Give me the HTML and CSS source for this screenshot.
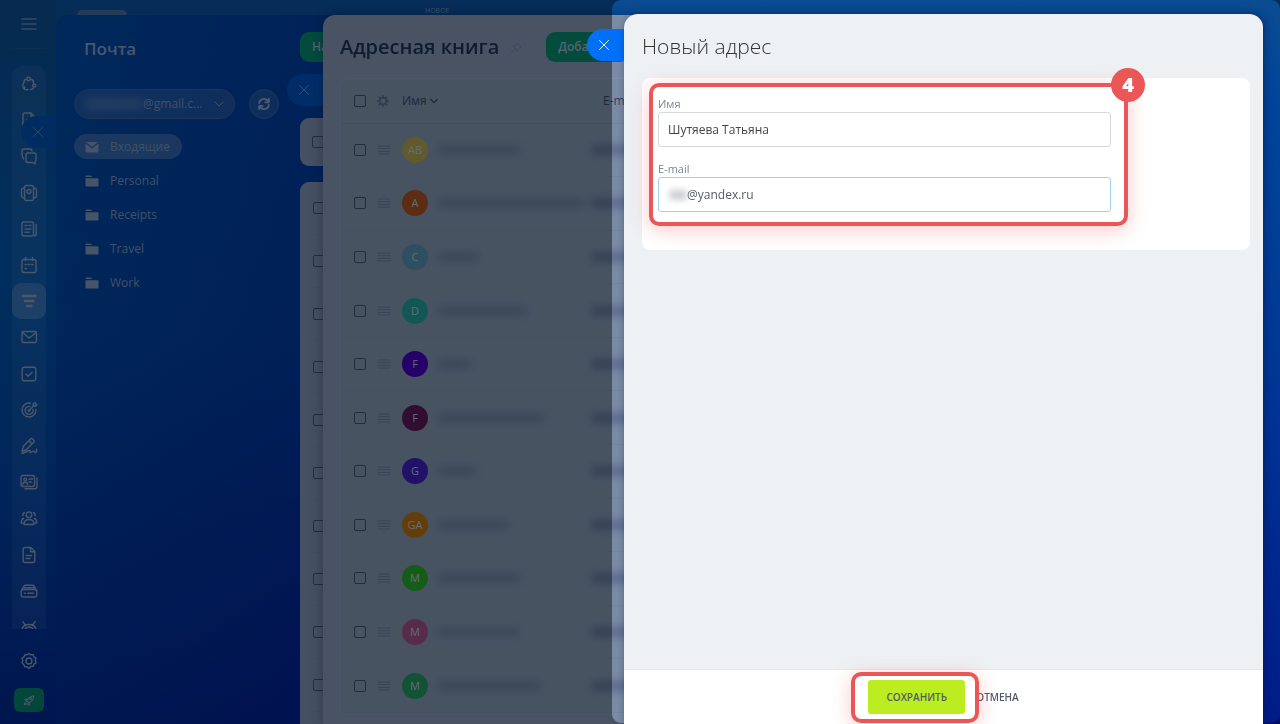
FILE: index.html
```html
<!DOCTYPE html>
<html lang="ru">
<head>
<meta charset="utf-8">
<title>Новый адрес</title>
<link rel="stylesheet" href="styles.css">
</head>
<body>

<svg class="defs" aria-hidden="true">
  <symbol id="cross" viewBox="0 0 12 12"><path d="M1.5 1.5l9 9M10.5 1.5l-9 9"/></symbol>
  <symbol id="folder" viewBox="0 0 14 12"><path d="M.5 1.2q0-.7.7-.7h4.3l2 1.500H.5z M.5 3.200h12.300q.7 0 .7.7v6.900q0 .7-.7.7H1.200q-.7 0-.7-.7z"/></symbol>
  <symbol id="drag" viewBox="0 0 14 10"><path d="M1 1h12M1 3.7h12M1 6.4h12M1 9h12"/></symbol>
  <symbol id="down" viewBox="0 0 10 6"><path d="M1 1l4 4 4-4"/></symbol>
</svg>

<div class="page">
  <aside class="sidebar">
    <button class="burger" type="button" aria-label="Меню">
      <svg viewBox="0 0 16 12"><path d="M1 1h14M1 6h14M1 11h14"/></svg>
    </button>
    <nav class="strip">
      <ul class="strip-list">
        <li><a href="#"><svg viewBox="0 0 18 18"><circle cx="8.500" cy="4" r="1.700"/><circle cx="14.200" cy="10.500" r="1.500"/><path d="M6 4.500Q4 4.500 4 7M11 4.500q2.500 0 2.500 3.500M4 7.500q-1.500 1.500-1 3.500M4 14q2 1.500 4 .5M10.500 14.500q2.500 0 3-1.500"/><circle cx="4" cy="12.500" r=".8"/></svg></a></li>
        <li><a href="#"><svg viewBox="0 0 18 18"><path d="M3 16V3.500Q3 2 4.500 2H11l4 4v10M11 2v4h4M6.500 9h3"/></svg></a></li>
        <li><a href="#"><svg viewBox="0 0 18 18"><path d="M3.500 12Q2 9 2 7V4Q2 2 4 2h6q2 0 2 2"/><path d="M8 6h6q2 0 2 2v5q0 1.500-1 2v2l-2.500-1.500H8q-2 0-2-2V8q0-2 2-2z"/></svg></a></li>
        <li><a href="#"><svg viewBox="0 0 18 18"><rect x="4.500" y="1.500" width="9" height="15" rx="2"/><circle cx="9" cy="7.500" r="2"/><path d="M4 4.200H3Q1.500 4.500 1.500 6v6q0 1.500 1.500 1.800h1M14 4.200h1q1.500.3 1.500 1.800v6q0 1.500-1.500 1.800h-1"/></svg></a></li>
        <li><a href="#"><svg viewBox="0 0 18 18"><rect x="2" y="2" width="11.500" height="14" rx="2"/><path d="M16.200 4.500v9.500q0 2-1.800 2M5 5.500h2M9 5.500h2M5 9h6M5 12.200h4"/></svg></a></li>
        <li><a href="#"><svg viewBox="0 0 18 18"><rect x="2" y="3.500" width="14" height="13" rx="2"/><path d="M5.500 1.500v3M12.500 1.500v3M5 8.500h1.500M8.300 8.500h1.500M11.600 8.500h1.500M5 12.500h1.500"/></svg></a></li>
        <li class="current"><a href="#"><svg class="bold" viewBox="0 0 18 18"><path d="M3 4h12.500M5 9h8.500M7.300 14h4"/></svg></a></li>
        <li><a href="#"><svg viewBox="0 0 18 18"><rect x="2" y="3.500" width="14.500" height="11" rx="1.500"/><path d="M3 5l6.200 5L15.500 5"/></svg></a></li>
        <li><a href="#"><svg viewBox="0 0 18 18"><rect x="2.200" y="2.200" width="13.600" height="13.600" rx="2"/><path d="M6 9l2.200 2.200L12 7.300"/></svg></a></li>
        <li><a href="#"><svg viewBox="0 0 18 18"><path d="M10.500 2.200A7 7 0 1 0 16 8.500M10 5.500a4 4 0 1 0 3 3M9 9.500l5-5M13 5l.5-2.500L15 1.500l.5 1.500 1.500.5-1.500 1.700z"/><circle cx="9" cy="9.500" r=".8"/></svg></a></li>
        <li><a href="#"><svg viewBox="0 0 18 18"><path d="M2 14.500l1.200-5L10.500 2q1-1 2.200 0l1 1q1 1.200 0 2.200L6.500 12.500zM9 3.800l3 3M2 16.500l7-3q1.500-.5 1 1t1 1l2-1.200q1.200-.5 1.500.6.500 1.300 2-.2V12"/></svg></a></li>
        <li><a href="#"><svg viewBox="0 0 18 18"><rect x="1" y="2.500" width="13.500" height="11" rx="2"/><path d="M17 5v8.500q0 2.200-2.200 2.200H5M9 6h3.500M9 9h2.500"/><circle cx="5.200" cy="6.500" r="1.400"/><path d="M2.800 11.500q0-2.300 2.400-2.300t2.400 2.300"/></svg></a></li>
        <li><a href="#"><svg viewBox="0 0 18 18"><circle cx="9" cy="5.800" r="2.800"/><path d="M4 15.500q0-5 5-5t5 5zM4.500 3.500q-2 .8-1.500 3.200M13.500 3.500q2 .8 1.500 3.200M3.500 9.500Q1.200 10.500 1.200 14h1.500M14.500 9.500q2.300 1 2.300 4.500h-1.500"/></svg></a></li>
        <li><a href="#"><svg viewBox="0 0 18 18"><path d="M3.200 3.500q0-2 2-2h5.600l4 4v9q0 2-2 2H5.200q-2 0-2-2zM10.500 1.800v4h4M6 9.500h5.500M6 12.500h4"/></svg></a></li>
        <li><a href="#"><svg viewBox="0 0 18 18"><rect x="1.200" y="7.500" width="15.600" height="7.500" rx="2"/><path d="M2 7.800l1.800-3.500q.5-1 1.700-1h7q1.200 0 1.700 1L16 7.800M4 5.700h10M4.500 11.200h1M8 11.200h5.500"/></svg></a></li>
        <li><a href="#"><svg viewBox="0 0 18 18"><path d="M2 11.500q1-5 7-5t7 5M3 3.500l2.500 4M15 3.500l-2.500 4M5 11.500q1-2.500 4-2.500t4 2.500"/></svg></a></li>
      </ul>
    </nav>
    <a class="settings" href="#" aria-label="Настройки">
      <svg viewBox="0 0 18 18"><path d="M9 1.500l1.900 1.300 2.300-.1.800 2.200 1.900 1.300-.6 2.300.6 2.400-1.900 1.300-.8 2.200-2.300-.1L9 16.500l-1.900-1.700-2.300.1L4 12.700l-1.900-1.800.6-2.400-.6-2.300L4 4.900l.8-2.200 2.300.1z"/><circle cx="9" cy="9" r="3"/></svg>
    </a>
    <a class="rocket" href="#" aria-label="Тариф">
      <svg viewBox="0 0 18 18"><path d="M6.500 10.500q1.500-6 8.500-7 .3 6.500-6.500 9zM7 8L3.500 8.500l2 2M9.500 12.500v3l-2-1.500M4 12l-1 3 3-1"/><circle cx="11" cy="7.200" r="1.200"/></svg>
    </a>
  </aside>

  <div class="main">
    <div class="topbar"><span class="search"></span><span class="fresh">НОВОЕ</span></div>
    <div class="mail">
      <section class="folders">
        <h2>Почта</h2>
        <div class="account">
          <button class="mailbox" type="button"><span class="smudge"></span>@gmail.c...<svg viewBox="0 0 10 6"><use href="#down"/></svg></button>
          <button class="sync" type="button" aria-label="Обновить">
            <svg viewBox="0 0 16 16"><path d="M2.500 7A5.500 5.500 0 0 1 12.500 4.500M13.500 9A5.500 5.500 0 0 1 3.500 11.500"/><path d="M13.500 2v4h-4M2.500 14v-4h4"/></svg>
          </button>
        </div>
        <ul class="folder-list">
          <li class="current"><a href="#"><svg viewBox="0 0 14 12"><path d="M.5 2.500v7.800q0 1.200 1.200 1.200h10.600q1.200 0 1.200-1.200V2.500L7 7.500zM1 1h12L7 5.700z"/></svg>Входящие</a></li>
          <li><a href="#"><svg><use href="#folder"/></svg>Personal</a></li>
          <li><a href="#"><svg><use href="#folder"/></svg>Receipts</a></li>
          <li><a href="#"><svg><use href="#folder"/></svg>Travel</a></li>
          <li><a href="#"><svg><use href="#folder"/></svg>Work</a></li>
        </ul>
      </section>
      <section class="letters">
        <button class="green" type="button">На</button>
        <div class="letters-head"><input type="checkbox" aria-label="Выбрать все"></div>
        <ul class="letters-list">
          <li><input type="checkbox" aria-label="Письмо"></li>
          <li><input type="checkbox" aria-label="Письмо"></li>
          <li><input type="checkbox" aria-label="Письмо"></li>
          <li><input type="checkbox" aria-label="Письмо"></li>
          <li><input type="checkbox" aria-label="Письмо"></li>
          <li><input type="checkbox" aria-label="Письмо"></li>
          <li><input type="checkbox" aria-label="Письмо"></li>
          <li><input type="checkbox" aria-label="Письмо"></li>
          <li><input type="checkbox" aria-label="Письмо"></li>
          <li><input type="checkbox" aria-label="Письмо"></li>
        </ul>
      </section>
    </div>
  </div>
</div>

<button class="close close-mail" type="button" aria-label="Закрыть"><svg><use href="#cross"/></svg></button>
<button class="close close-book" type="button" aria-label="Закрыть"><svg><use href="#cross"/></svg></button>

<!-- Address book slider -->
<section class="book">
  <header>
    <h1>Адресная книга</h1>
    <svg class="pin" viewBox="0 0 12 12"><path d="M7 1l4 4-1 .5-2 2v2L3 4h2l2-2zM5 7l-4 4"/></svg>
    <button class="green" type="button">Добавить</button>
  </header>
  <div class="grid">
    <table>
      <colgroup>
        <col class="w-check"><col class="w-drag"><col class="w-ava"><col class="w-text"><col>
      </colgroup>
      <thead>
        <tr>
          <th class="c-check"><input type="checkbox" aria-label="Выбрать все"></th>
          <th><svg class="gear" viewBox="0 0 12 12"><circle cx="6" cy="6" r="3.300"/><path d="M6 .5v2M6 9.500v2M.5 6h2M9.500 6h2M2.100 2.100l1.400 1.400M8.500 8.500l1.400 1.400M2.100 9.900l1.400-1.400M8.500 3.500l1.400-1.400"/></svg></th>
          <th colspan="2">Имя <svg class="sort" viewBox="0 0 10 6"><use href="#down"/></svg></th>
          <th>E-mail</th>
        </tr>
      </thead>
      <tbody>
        <tr><td class="c-check"><input type="checkbox" aria-label="AB"></td><td><svg class="drag"><use href="#drag"/></svg></td><td><span class="ava yellow">AB</span></td><td><span class="smudge" style="width:84px"></span></td><td><span class="smudge mail-smudge"></span></td></tr>
        <tr><td class="c-check"><input type="checkbox" aria-label="A"></td><td><svg class="drag"><use href="#drag"/></svg></td><td><span class="ava brown">A</span></td><td><span class="smudge" style="width:148px"></span></td><td><span class="smudge mail-smudge"></span></td></tr>
        <tr><td class="c-check"><input type="checkbox" aria-label="C"></td><td><svg class="drag"><use href="#drag"/></svg></td><td><span class="ava sky">C</span></td><td><span class="smudge" style="width:42px"></span></td><td><span class="smudge mail-smudge"></span></td></tr>
        <tr><td class="c-check"><input type="checkbox" aria-label="D"></td><td><svg class="drag"><use href="#drag"/></svg></td><td><span class="ava teal">D</span></td><td><span class="smudge" style="width:90px"></span></td><td><span class="smudge mail-smudge"></span></td></tr>
        <tr><td class="c-check"><input type="checkbox" aria-label="F"></td><td><svg class="drag"><use href="#drag"/></svg></td><td><span class="ava violet">F</span></td><td><span class="smudge" style="width:34px"></span></td><td><span class="smudge mail-smudge"></span></td></tr>
        <tr><td class="c-check"><input type="checkbox" aria-label="F"></td><td><svg class="drag"><use href="#drag"/></svg></td><td><span class="ava plum">F</span></td><td><span class="smudge" style="width:108px"></span></td><td><span class="smudge mail-smudge"></span></td></tr>
        <tr><td class="c-check"><input type="checkbox" aria-label="G"></td><td><svg class="drag"><use href="#drag"/></svg></td><td><span class="ava indigo">G</span></td><td><span class="smudge" style="width:40px"></span></td><td><span class="smudge mail-smudge"></span></td></tr>
        <tr><td class="c-check"><input type="checkbox" aria-label="GA"></td><td><svg class="drag"><use href="#drag"/></svg></td><td><span class="ava orange">GA</span></td><td><span class="smudge" style="width:72px"></span></td><td><span class="smudge mail-smudge"></span></td></tr>
        <tr><td class="c-check"><input type="checkbox" aria-label="M"></td><td><svg class="drag"><use href="#drag"/></svg></td><td><span class="ava lime">M</span></td><td><span class="smudge" style="width:84px"></span></td><td><span class="smudge mail-smudge"></span></td></tr>
        <tr><td class="c-check"><input type="checkbox" aria-label="M"></td><td><svg class="drag"><use href="#drag"/></svg></td><td><span class="ava pink">M</span></td><td><span class="smudge" style="width:82px"></span></td><td><span class="smudge mail-smudge"></span></td></tr>
        <tr><td class="c-check"><input type="checkbox" aria-label="M"></td><td><svg class="drag"><use href="#drag"/></svg></td><td><span class="ava emerald">M</span></td><td><span class="smudge" style="width:104px"></span></td><td><span class="smudge mail-smudge"></span></td></tr>
      </tbody>
    </table>
  </div>
</section>

<div class="spot"></div>
<button class="close close-form" type="button" aria-label="Закрыть"><svg><use href="#cross"/></svg></button>

<!-- New address slider -->
<form class="editor">
  <h1>Новый адрес</h1>
  <div class="card">
    <div class="fields">
      <label for="name">Имя</label>
      <input id="name" type="text" value="Шутяева Татьяна">
      <label for="email">E-mail</label>
      <div class="email-box">
        <input id="email" type="text" value="@yandex.ru">
        <span class="smudge"></span>
      </div>
      <div class="callout"><span class="step">4</span></div>
    </div>
  </div>
  <footer>
    <div class="save">
      <button type="button">СОХРАНИТЬ</button>
      <div class="callout"></div>
    </div>
    <a href="#">ОТМЕНА</a>
  </footer>
</form>

</body>
</html>
```
FILE: styles.css
```css
* { box-sizing: border-box; }

body {
  margin: 0;
  height: 100vh;
  overflow: hidden;
  font: 12px/18px "Open Sans", "Noto Sans", sans-serif;
  background: linear-gradient(180deg, #0b4c92 0, #00459b 15%, #003896 50%, #001c8a 100%);
}

h1, h2 { margin: 0; }
ul { margin: 0; padding: 0; list-style: none; }
a { color: inherit; text-decoration: none; }
button { font: inherit; border: 0; padding: 0; cursor: pointer; }
svg { display: block; fill: none; stroke: currentColor; stroke-linecap: round; stroke-linejoin: round; }
.defs { position: absolute; width: 0; height: 0; }

input[type=checkbox] {
  appearance: none;
  display: block;
  width: 12px;
  height: 12px;
  margin: 0;
  border: 1px solid #384c69;
  border-radius: 2px;
}

.smudge {
  display: block;
  height: 10px;
  border-radius: 4px;
  background: #4c5e7c;
  opacity: .45;
  filter: blur(4px);
}

/* Page behind the sliders */

.page { display: flex; height: 100vh; }

.sidebar {
  flex: none;
  width: 56px;
  display: flex;
  flex-direction: column;
  align-items: flex-start;
  padding: 18px 0 12px 12px;
  color: #7b91b0;
  background: linear-gradient(180deg, #0b4784 0, #024f9c 35%, #003f96 65%, #002484 100%);
}
.sidebar svg { width: 18px; height: 18px; stroke-width: 1.4; }
.sidebar svg.bold { stroke-width: 2.6; }
.burger { width: 34px; height: 31px; margin-bottom: 17px; background: none; color: #5d789f; border-bottom: 1px solid #134d8c; }
.sidebar .burger svg { width: 16px; height: 12px; margin: 0 auto 18px; }
.strip { flex: 1; min-height: 0; width: 34px; overflow: hidden; border-radius: 10px 10px 0 0; background: rgba(110, 140, 190, .12); }
.strip-list { display: flex; flex-direction: column; height: calc(100% + 16px); }
.strip-list li { flex: 1; display: flex; border-radius: 9px; }
.strip-list a { margin: auto; }
.strip-list .current { background: rgba(150, 170, 200, .28); }
.settings { width: 34px; display: flex; justify-content: center; padding: 23px 0 18px; }
.rocket { width: 30px; height: 24px; margin-left: 2px; display: flex; border-radius: 6px; background: #087560; }
.sidebar .rocket svg { width: 14px; height: 14px; margin: auto; }

.main { flex: 1; min-width: 0; display: flex; flex-direction: column; }
.topbar { flex: none; height: 15px; display: flex; align-items: flex-end; overflow: hidden; color: #6f8ab2; }
.search { width: 50px; height: 5px; margin-left: 21px; border-radius: 6px 6px 0 0; background: #3f638f; }
.fresh { margin-left: 298px; font-size: 7px; line-height: 9px; }
.mail {
  flex: 1;
  min-height: 0;
  width: 400px;
  display: flex;
  border-radius: 12px 0 0 0;
  background: linear-gradient(115deg, rgba(0, 76, 150, .5), rgba(0, 24, 134, .6)), linear-gradient(180deg, #003c96 0, #00409a 45%, #001a80 100%);
}
.folders { flex: none; width: 244px; padding: 22px 18px; color: #7086ac; }
.folders h2 { margin: 0 10px 28px; font-size: 17px; line-height: 24px; font-weight: 600; color: #7d90b2; }
.account { display: flex; gap: 14px; }
.mailbox {
  display: flex;
  align-items: center;
  width: 161px;
  height: 30px;
  padding: 0 10px;
  border: 1px solid #34588f;
  border-radius: 15px;
  color: #7086ac;
  background: rgba(130, 150, 180, .2);
}
.mailbox .smudge { width: 58px; background: #6d86ad; }
.mailbox svg { width: 10px; height: 6px; margin-left: auto; }
.sync { width: 30px; height: 30px; border: 1px solid #34588f; border-radius: 15px; background: rgba(130, 150, 180, .2); color: #859bbd; }
.sync svg { width: 14px; height: 14px; margin: auto; stroke-width: 2; }
.folder-list { display: flex; flex-direction: column; gap: 9px; align-items: flex-start; margin-top: 15px; }
.folder-list a { display: flex; align-items: center; gap: 11px; height: 25px; padding: 0 12px 0 11px; border-radius: 13px; }
.folder-list .current a { background: rgba(150, 165, 190, .3); }
.folder-list svg { width: 14px; height: 12px; fill: #778bae; stroke: none; }

.letters { flex: 1; display: flex; flex-direction: column; padding-top: 17px; }
.green {
  flex: none;
  height: 30px;
  padding: 0 12px;
  border-radius: 9px;
  text-align: left;
  font-weight: 600;
  color: #8fa7be;
  background: #057d66;
}
.letters-head { flex: none; height: 48px; margin: 56px 0 16px; padding: 18px 12px; border-radius: 9px; background: #7385a3; }
.letters-list { flex: 1; padding-left: 13px; border-radius: 9px 0 0 0; background: #7385a3; }
.letters-list li { display: flex; align-items: center; height: 53px; border-bottom: 1px solid #6e819f; }

/* Round close tabs on the left edge of each slider */

.close {
  position: fixed;
  width: 40px;
  height: 32px;
  padding-left: 11px;
  border-radius: 16px 0 0 16px;
  color: #fff;
  background: #0a72ff;
}
.close svg { width: 12px; height: 12px; }
.close-mail { left: 21px; top: 116px; width: 35px; color: #4478b4; background: #004aa4; }
.close-book { left: 287px; top: 74px; color: #4a7fc4; background: #004cae; }
.close-form { right: calc(100% - 627px); top: 29px; padding-left: 11px; background: #0070f8; }

/* Address book slider */

.book {
  position: fixed;
  left: 323px;
  top: 15px;
  right: 17px;
  bottom: 0;
  display: flex;
  flex-direction: column;
  padding: 17px 0 11px 17px;
  border-radius: 12px 12px 0 0;
  color: #2c4262;
  background: #7a8ba6;
  box-shadow: 0 0 12px rgba(0, 20, 60, .35);
}
.book header { flex: none; display: flex; align-items: center; margin-bottom: 16px; }
.book h1 { font-size: 20px; line-height: 30px; font-weight: 600; color: #182e50; }
.pin { width: 12px; height: 12px; margin: 2px 24px 0 11px; color: #64789a; }
.grid { flex: 1; min-height: 0; border-radius: 9px 0 0 0; background: #798aa4; border-top: 1px solid #7e90aa; border-left: 1px solid #7e90aa; }
table { width: 100%; height: 100%; table-layout: fixed; border-collapse: collapse; }
thead tr { height: 44px; }
th { padding: 0; text-align: left; font-weight: 400; border-bottom: 1px solid #70829f; }
td { padding: 0; border-bottom: 1px solid #7486a1; }
.c-check { padding-left: 13px; }
.w-check { width: 36px; }
.w-drag { width: 25px; }
.w-ava { width: 35px; }
.w-text { width: 166px; }
.gear { width: 12px; height: 12px; color: #4b607f; stroke-width: 1.4; }
.sort { display: inline-block; width: 8px; height: 6px; stroke-width: 1.6; vertical-align: 1px; }
.drag { width: 14px; height: 10px; color: #5d7191; stroke-width: 1; }
.mail-smudge { width: 46px; margin-left: -12px; background: #33486a; }
.ava { display: block; width: 26px; height: 26px; border-radius: 13px; text-align: center; font-size: 11px; line-height: 26px; color: #a8b4c4; }
.yellow { background: #a1964a; }
.brown { background: #9c4c20; }
.sky { background: #4c84a2; }
.teal { background: #1f928e; }
.violet { background: #3f00b0; }
.plum { background: #541654; }
.indigo { background: #361fb0; }
.orange { background: #a56812; }
.lime { background: #259a2a; }
.pink { background: #92497c; }
.emerald { background: #1d8a58; }

/* Dims everything outside the active slider */

.spot {
  position: fixed;
  left: 612px;
  top: 0;
  right: 0;
  bottom: 1px;
  border-radius: 9px;
  box-shadow: 0 0 0 2000px rgba(0, 0, 0, .4);
  pointer-events: none;
}

/* New address slider */

.editor {
  position: fixed;
  left: 624px;
  top: 14px;
  right: 17px;
  bottom: 0;
  display: flex;
  flex-direction: column;
  border-radius: 14px 14px 0 0;
  background: #edf1f4;
  overflow: hidden;
  box-shadow: 0 0 6px rgba(0, 20, 60, .3);
}
.editor h1 { margin: 16px 18px; font-size: 21px; line-height: 32px; font-weight: 300; color: #333; }
.card { margin: 0 13px 0 18px; padding: 17px 139px 38px 16px; border-radius: 8px; background: #fff; }
.fields { position: relative; display: flex; flex-direction: column; }
.fields label { font-size: 11px; line-height: 17px; color: #7c8594; }
.fields input {
  width: 100%;
  height: 35px;
  padding: 0 9px;
  border: 1px solid #d5d9dd;
  border-radius: 3px;
  font: 12px/18px "Open Sans", "Noto Sans", sans-serif;
  color: #444;
  background: #fff;
  outline: none;
}
.fields #name { margin-bottom: 13px; }
.email-box { position: relative; height: 35px; }
.fields #email { display: block; padding-left: 28px; border-color: #a0d0f3; color: #525c69; }
.email-box .smudge { position: absolute; left: 11px; top: 13px; width: 18px; filter: blur(3px); background: #8d929a; }

.callout {
  position: absolute;
  border: 4px solid #eb5757;
  border-radius: 10px;
  box-shadow: 0 4px 20px rgba(255, 60, 70, .28);
  pointer-events: none;
}
.fields .callout { inset: -12px -17px -14px -9px; }
.step {
  position: absolute;
  right: -21px;
  top: -19px;
  width: 34px;
  height: 34px;
  border-radius: 17px;
  text-align: center;
  font: 800 20px/34px "Open Sans", Inter, sans-serif;
  color: #fff;
  background: #eb5757;
}

.editor footer {
  display: flex;
  justify-content: center;
  align-items: center;
  gap: 11px;
  height: 55px;
  margin-top: auto;
  background: #fff;
  border-top: 1px solid #e3e8ec;
  font-size: 10px;
  font-weight: 600;
  color: #525c69;
}
.save { position: relative; }
.save button { width: 97px; height: 34px; border-radius: 3px; color: #525c69; background: #bbed21; }
.save .callout { z-index: 1; inset: -8px -14px -9px -17px; }
```
